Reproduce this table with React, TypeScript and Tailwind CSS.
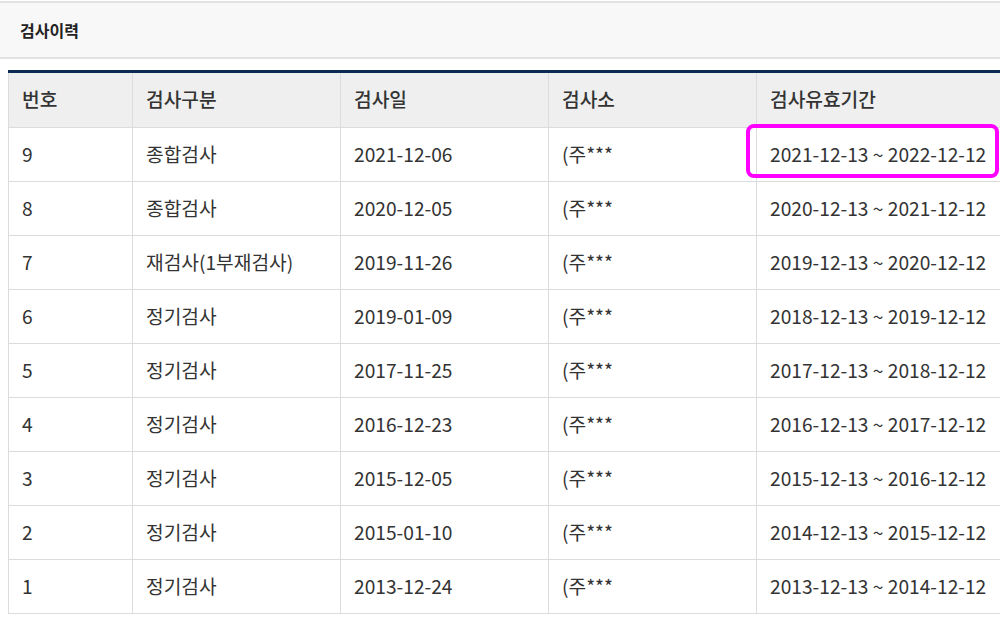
const rows = [
  { no: '9', type: '종합검사', date: '2021-12-06', place: '(주***', period: '2021-12-13 ~ 2022-12-12' },
  { no: '8', type: '종합검사', date: '2020-12-05', place: '(주***', period: '2020-12-13 ~ 2021-12-12' },
  { no: '7', type: '재검사(1부재검사)', date: '2019-11-26', place: '(주***', period: '2019-12-13 ~ 2020-12-12' },
  { no: '6', type: '정기검사', date: '2019-01-09', place: '(주***', period: '2018-12-13 ~ 2019-12-12' },
  { no: '5', type: '정기검사', date: '2017-11-25', place: '(주***', period: '2017-12-13 ~ 2018-12-12' },
  { no: '4', type: '정기검사', date: '2016-12-23', place: '(주***', period: '2016-12-13 ~ 2017-12-12' },
  { no: '3', type: '정기검사', date: '2015-12-05', place: '(주***', period: '2015-12-13 ~ 2016-12-12' },
  { no: '2', type: '정기검사', date: '2015-01-10', place: '(주***', period: '2014-12-13 ~ 2015-12-12' },
  { no: '1', type: '정기검사', date: '2013-12-24', place: '(주***', period: '2013-12-13 ~ 2014-12-12' },
];

const headers = ['번호', '검사구분', '검사일', '검사소', '검사유효기간'];

const App = () => {
  return (
    <div
      className="relative w-[1000px] h-[628px] overflow-hidden bg-white text-[#333]"
      style={{ fontFamily: '"Noto Sans CJK KR", "Noto Sans", sans-serif' }}
    >
      {/* 상단 타이틀 바 */}
      <div className="mt-px h-[58px] border-y-2 border-[#e2e2e2] bg-[#f8f8f8] flex items-center pl-5">
        <span className="text-[16px] font-bold text-[#222]">검사이력</span>
      </div>

      {/* 검사이력 테이블 */}
      <div className="mt-[11px] ml-2 w-[1010px] border-t-[3px] border-[#0d2a55]">
        <table className="w-full border-collapse table-fixed text-[19.2px]">
          <colgroup>
            <col className="w-[124px]" />
            <col className="w-[208px]" />
            <col className="w-[208px]" />
            <col className="w-[208px]" />
            <col />
          </colgroup>
          <thead>
            <tr className="h-[54px] bg-[#efefef]">
              {headers.map((h) => (
                <th
                  key={h}
                  className="border border-t-0 border-[#dcdcdc] px-[13px] text-left font-medium text-[#333]"
                >
                  {h}
                </th>
              ))}
            </tr>
          </thead>
          <tbody>
            {rows.map((r) => (
              <tr key={r.no} className="h-[54px]">
                <td className="border border-[#dcdcdc] px-[13px]">{r.no}</td>
                <td className="border border-[#dcdcdc] px-[13px]">{r.type}</td>
                <td className="border border-[#dcdcdc] px-[13px]">{r.date}</td>
                <td className="border border-[#dcdcdc] px-[13px]">{r.place}</td>
                <td className="border border-[#dcdcdc] px-[13px]">{r.period}</td>
              </tr>
            ))}
          </tbody>
        </table>
      </div>

      {/* 강조 표시 */}
      <div className="absolute left-[746px] top-[124px] w-[253px] h-[54px] border-4 border-[#ff00ff] rounded-[8px]" />
    </div>
  );
};

export default App;
